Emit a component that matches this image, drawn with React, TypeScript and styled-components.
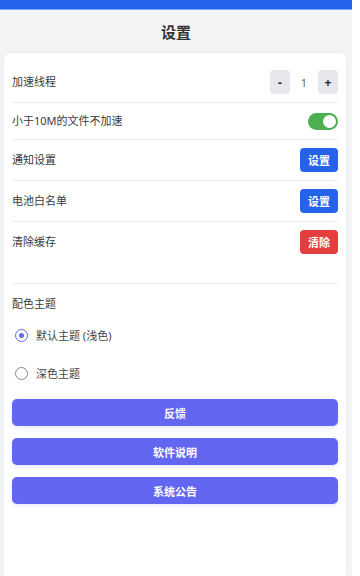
import React, { useState } from "react";
import styled, { createGlobalStyle } from "styled-components";

const GlobalStyle = createGlobalStyle`
    html, body {
        margin: 0;
        padding: 0;
        background: #ffffff;
    }
    body {
        font-family: "Noto Sans", "Noto Sans CJK SC", sans-serif;
        color: #333333;
    }
    * { box-sizing: border-box; }
`;

const Page = styled.div`
    width: 352px;
    min-height: 576px;
    background: #f3f4f6;
    display: flex;
    flex-direction: column;
`;

const TopBar = styled.div`
    height: 10px;
    background: #2563eb;
    border-bottom: 1px solid #7fa6f5;
`;

const Title = styled.h1`
    margin: 0;
    height: 43px;
    display: flex;
    align-items: center;
    justify-content: center;
    font-size: 15px;
    font-weight: 700;
    color: #333333;
`;

const Card = styled.div`
    flex: 1;
    margin: 0 6px 0 4px;
    padding: 0 8px;
    background: #ffffff;
    border-radius: 6px 6px 0 0;
    box-shadow: 0 0 4px rgba(0, 0, 0, 0.04);
    display: flex;
    flex-direction: column;
`;

const Group = styled.div`
    display: flex;
    flex-direction: column;
    padding-top: 9px;
    margin-bottom: 21px;
`;

const Row = styled.div`
    display: flex;
    align-items: center;
    justify-content: space-between;
    padding: 8px 0;
    border-bottom: 1px solid #eeeeee;
    &:last-child { border-bottom: none; }
`;

const Label = styled.span`
    font-size: 11px;
    line-height: 20px;
    color: #3a3a3a;
`;

const Stepper = styled.div`
    display: flex;
    align-items: center;
    gap: 6px;
`;

const StepButton = styled.button`
    width: 20px;
    height: 24px;
    border: none;
    border-radius: 4px;
    background: #e5e7eb;
    color: #222222;
    font-size: 12px;
    font-weight: 700;
    padding: 0;
    font-family: "Noto Sans", sans-serif;
`;

const StepValue = styled.span`
    min-width: 16px;
    text-align: center;
    font-size: 11px;
    color: #666666;
`;

const Toggle = styled.div<{ $on: boolean }>`
    width: 30px;
    height: 17px;
    border-radius: 9px;
    background: ${(p) => (p.$on ? "#4caf50" : "#cccccc")};
    position: relative;
    &::after {
        content: "";
        position: absolute;
        top: 2px;
        left: ${(p) => (p.$on ? "15px" : "2px")};
        width: 13px;
        height: 13px;
        border-radius: 50%;
        background: #ffffff;
    }
`;

const SmallButton = styled.button<{ $danger?: boolean }>`
    width: 38px;
    height: 24px;
    border: none;
    border-radius: 4px;
    background: ${(p) => (p.$danger ? "#e53e3e" : "#2563eb")};
    color: #ffffff;
    font-size: 11px;
    font-weight: 700;
    padding: 0;
    font-family: "Noto Sans", "Noto Sans CJK SC", sans-serif;
`;

const ThemeSection = styled.div`
    border-top: 1px solid #eeeeee;
    padding-top: 10px;
    display: flex;
    flex-direction: column;
`;

const SectionTitle = styled.div`
    font-size: 11px;
    line-height: 20px;
    color: #3a3a3a;
    margin-bottom: 2px;
`;

const RadioRow = styled.label`
    display: flex;
    align-items: center;
    gap: 8px;
    height: 38px;
    padding-left: 3px;
    font-size: 11px;
    color: #444444;
    cursor: pointer;
`;

const RadioDot = styled.span<{ $checked: boolean }>`
    width: 13px;
    height: 13px;
    border-radius: 50%;
    border: 1.5px solid ${(p) => (p.$checked ? "#6366f1" : "#888888")};
    display: flex;
    align-items: center;
    justify-content: center;
    &::after {
        content: "";
        width: 5px;
        height: 5px;
        border-radius: 50%;
        background: ${(p) => (p.$checked ? "#6366f1" : "transparent")};
    }
`;

const Actions = styled.div`
    display: flex;
    flex-direction: column;
    gap: 12px;
    margin-top: 7px;
`;

const WideButton = styled.button`
    width: 100%;
    height: 27px;
    border: none;
    border-radius: 5px;
    background: #6366f1;
    color: #ffffff;
    font-size: 11px;
    font-weight: 700;
    font-family: "Noto Sans", "Noto Sans CJK SC", sans-serif;
    box-shadow: 0 2px 4px rgba(99, 102, 241, 0.15);
`;

export default function App() {
    const [threads, setThreads] = useState(1);
    const [skipSmall, setSkipSmall] = useState(true);
    const [theme, setTheme] = useState("light");

    return (
        <Page>
            <GlobalStyle />
            <TopBar />
            <Title>设置</Title>
            <Card>
                <Group>
                    <Row>
                        <Label>加速线程</Label>
                        <Stepper>
                            <StepButton onClick={() => setThreads(Math.max(1, threads - 1))}>-</StepButton>
                            <StepValue>{threads}</StepValue>
                            <StepButton onClick={() => setThreads(threads + 1)}>+</StepButton>
                        </Stepper>
                    </Row>
                    <Row>
                        <Label>小于10M的文件不加速</Label>
                        <Toggle $on={skipSmall} onClick={() => setSkipSmall(!skipSmall)} />
                    </Row>
                    <Row>
                        <Label>通知设置</Label>
                        <SmallButton>设置</SmallButton>
                    </Row>
                    <Row>
                        <Label>电池白名单</Label>
                        <SmallButton>设置</SmallButton>
                    </Row>
                    <Row>
                        <Label>清除缓存</Label>
                        <SmallButton $danger>清除</SmallButton>
                    </Row>
                </Group>
                <ThemeSection>
                    <SectionTitle>配色主题</SectionTitle>
                    <RadioRow onClick={() => setTheme("light")}>
                        <RadioDot $checked={theme === "light"} />
                        默认主题 (浅色)
                    </RadioRow>
                    <RadioRow onClick={() => setTheme("dark")}>
                        <RadioDot $checked={theme === "dark"} />
                        深色主题
                    </RadioRow>
                </ThemeSection>
                <Actions>
                    <WideButton>反馈</WideButton>
                    <WideButton>软件说明</WideButton>
                    <WideButton>系统公告</WideButton>
                </Actions>
            </Card>
        </Page>
    );
}
